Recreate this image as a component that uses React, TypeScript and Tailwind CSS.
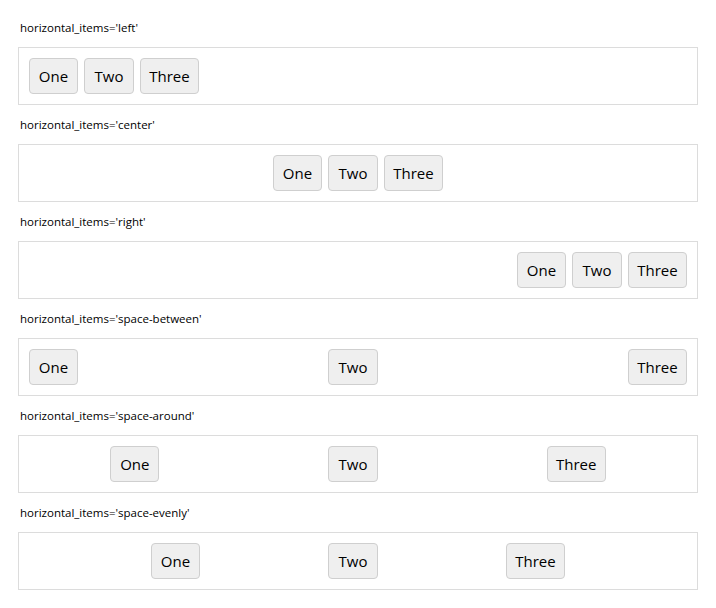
import React from "react";

const rows: { label: string; cls: string }[] = [
  { label: "horizontal_items='left'", cls: "justify-start" },
  { label: "horizontal_items='center'", cls: "justify-center" },
  { label: "horizontal_items='right'", cls: "justify-end" },
  { label: "horizontal_items='space-between'", cls: "justify-between" },
  { label: "horizontal_items='space-around'", cls: "justify-around" },
  { label: "horizontal_items='space-evenly'", cls: "justify-evenly" },
];

const buttons = [
  { t: "One", w: "w-[49px]" },
  { t: "Two", w: "w-[50px]" },
  { t: "Three", w: "w-[59px]" },
];

export default function App() {
  return (
    <div
      className="w-[716px] h-[608px] bg-white px-[18px] pt-[8px] text-black"
      style={{ fontFamily: '"Open Sans", "Noto Sans", sans-serif' }}
    >
      {rows.map((r) => (
        <div key={r.label}>
          <div className="mt-[12px] mb-[11px] h-4 leading-4 text-[11.5px] pl-[2px] whitespace-nowrap">
            {r.label}
          </div>
          <div className={`flex ${r.cls} border border-[#dcdcdc] p-[7px]`}>
            {buttons.map((b) => (
              <div
                key={b.t}
                className={`${b.w} m-[3px] h-[36px] flex items-center justify-center rounded-[4px] border border-[#cfcfcf] bg-[#efefef] text-[15px] whitespace-nowrap`}
              >
                {b.t}
              </div>
            ))}
          </div>
        </div>
      ))}
    </div>
  );
}
